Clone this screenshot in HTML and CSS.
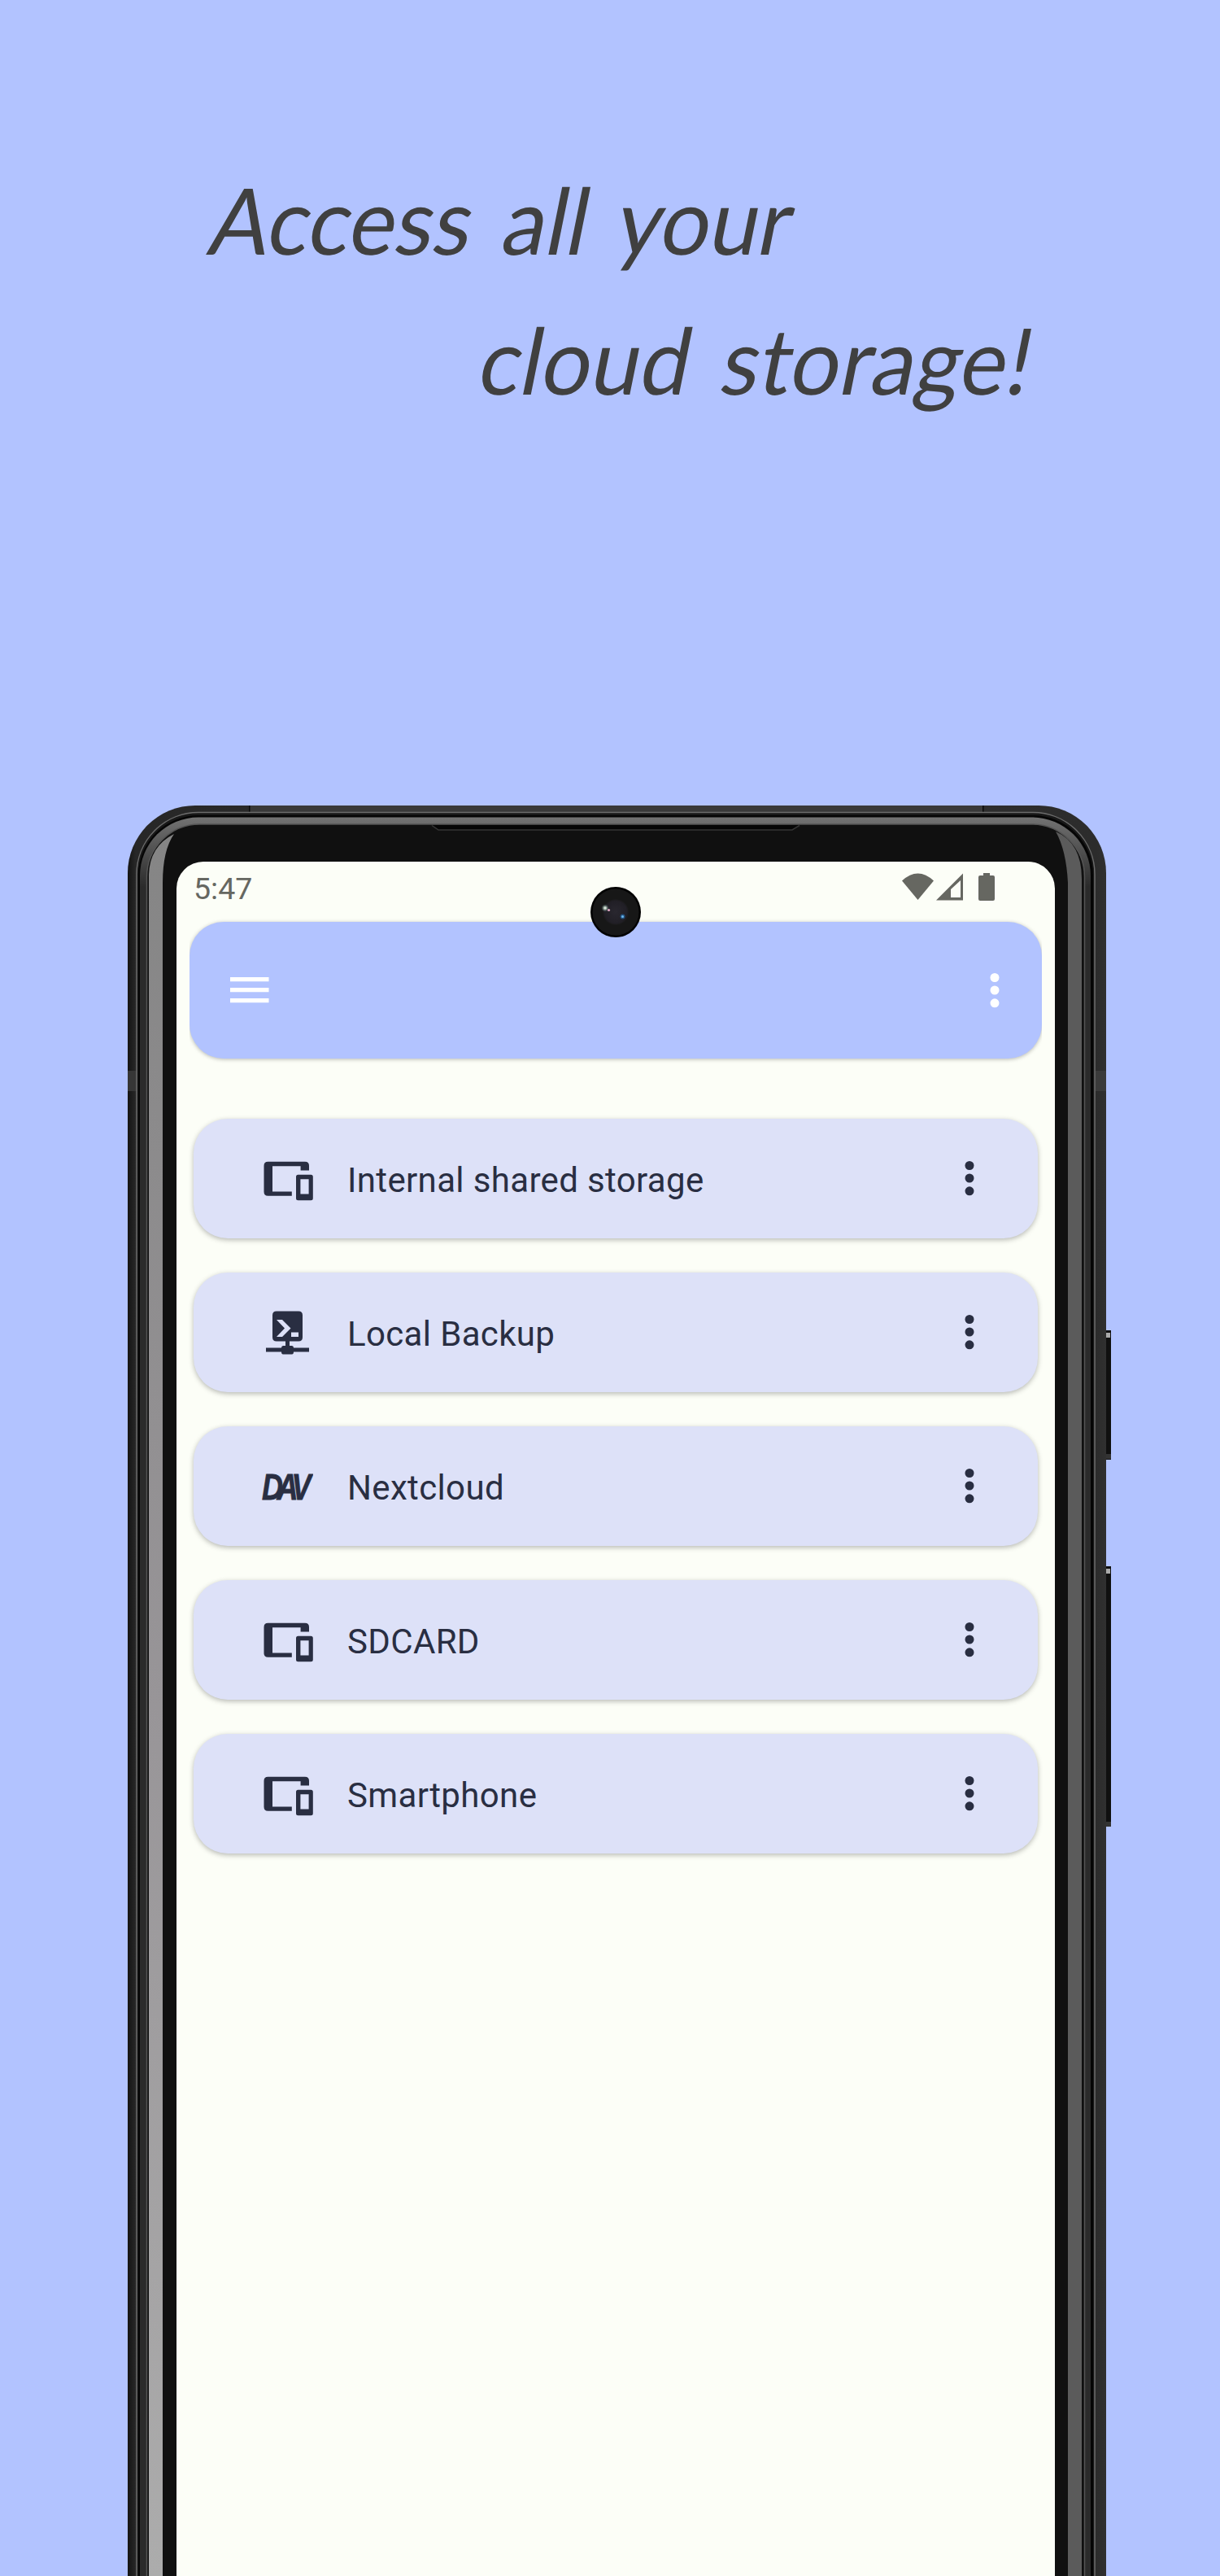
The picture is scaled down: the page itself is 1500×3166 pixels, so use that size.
FILE: index.html
```html
<!DOCTYPE html>
<html lang="en">
<head>
<meta charset="utf-8">
<title>Access all your cloud storage!</title>
<link rel="stylesheet" href="styles.css">
</head>
<body>
<h1 class="headline"><span class="line first">Access all your</span><span class="line second">cloud storage!</span></h1>
<div class="phone">
<svg class="frame" viewBox="150 985 1220 2181" aria-hidden="true">
  <defs>
    <linearGradient id="edge"><stop offset="0" stop-color="#141414"/><stop offset=".008" stop-color="#272727"/><stop offset=".5" stop-color="#303030"/><stop offset=".99" stop-color="#2c2c2c"/><stop offset="1" stop-color="#303030"/></linearGradient>
    <linearGradient id="shineL" x1="0" x2="0" y1="1025" y2="3166" gradientUnits="userSpaceOnUse"><stop offset="0" stop-color="#858585"/><stop offset=".5" stop-color="#989598"/><stop offset="1" stop-color="#acacac"/></linearGradient>
    <linearGradient id="rim" x1="0" x2="0" y1="1003" y2="1090" gradientUnits="userSpaceOnUse"><stop offset="0" stop-color="#747474"/><stop offset="1" stop-color="#2b2b2b"/></linearGradient>
  </defs>
  <g class="buttons">
    <rect x="1355" y="1635" width="11" height="159" fill="#101010"/><rect x="1360" y="1638" width="5" height="6" fill="#aaa"/><rect x="1359" y="1787" width="7" height="6" fill="#333"/>
    <rect x="1355" y="1925" width="11" height="320" fill="#101010"/><rect x="1360" y="1928" width="5" height="6" fill="#aaa"/><rect x="1359" y="2239" width="7" height="6" fill="#333"/>
  </g>
  <rect x="157" y="990" width="1203" height="2300" rx="83" fill="url(#edge)"/>
  <rect x="307" y="990" width="902" height="9" fill="#393939"/>
  <rect x="306" y="990" width="1.5" height="9" fill="#090909"/><rect x="1208" y="990" width="1.5" height="11" fill="#090909"/>
  <rect x="157" y="1316" width="12" height="25" fill="#363636"/><rect x="1346" y="1316" width="14" height="25" fill="#3b3b3b"/>
  <rect x="168" y="998.500" width="1178" height="2300" rx="76" fill="#181818" stroke="#6c6c6c" stroke-width="1.5"/>
  <rect x="170" y="1002" width="1174" height="2300" rx="74" fill="#050505"/>
  <rect x="172" y="1004.500" width="1169" height="2300" rx="72" fill="url(#rim)"/>
  <rect x="180.500" y="1013" width="1153" height="2300" rx="65" fill="#101010" stroke="#555" stroke-width="1.500"/>
  <path d="M183 3166V1075Q184 1040 214 1025Q200 1045 200 1085V3166Z" fill="url(#shineL)"/>
  <path d="M1313 3166V1085Q1311 1045 1298 1022Q1330 1036 1330 1080V3166Z" fill="#5b5b5b"/>
  <path d="M531 1014L539 1020H974L983 1014Z" fill="#060606"/>
  <path d="M531 1014.500L539 1020H974L983 1014.500" fill="none" stroke="#353535" stroke-width="1.500"/>
</svg>
<main class="screen">
  <div class="status"><span class="clock">5:47</span>
    <svg class="status-icons" viewBox="0 0 116 36" width="116" height="36"><g fill="#666761"><path d="M0 9.500Q19.500-8.500 39 9.500L19.500 33Z"/><path fill-rule="evenodd" d="M42 33.500L75 .5V33.500ZM60 30H72V9L60 20Z"/><path d="M100 0h8v3h4q2 0 2 2v27q0 2-2 2H96q-2 0-2-2V5q0-2 2-2h4Z"/></g></svg>
  </div>
  <svg class="camera" viewBox="0 0 62 62"><defs><radialGradient id="lens"><stop offset="0" stop-color="#29272f"/><stop offset=".85" stop-color="#211f26"/><stop offset="1" stop-color="#191919"/></radialGradient><radialGradient id="glow"><stop offset="0" stop-color="#fff"/><stop offset=".35" stop-color="#9fb3a4"/><stop offset="1" stop-color="#26333f" stop-opacity="0"/></radialGradient></defs><circle cx="31" cy="31" r="31" fill="#020202"/><circle cx="31" cy="31" r="28.500" fill="#171717"/><circle cx="31" cy="31" r="16" fill="url(#lens)"/><circle cx="18" cy="26" r="5" fill="url(#glow)"/><circle cx="22.500" cy="28.500" r="1.600" fill="#e0a8c4"/><circle cx="39.500" cy="36.500" r="3" fill="#24507c"/><circle cx="39.500" cy="36.500" r="1.500" fill="#6bb8ee"/></svg>
  <header class="toolbar-clip"><div class="toolbar">
    <svg width="48" height="34" viewBox="0 0 48 34" fill="#fff"><path d="M0 1h47.500v5.300H0zM0 14h47.500v5.300H0zM0 27h47.500v5.300H0z"/></svg>
    <svg width="12" height="44" viewBox="0 0 12 44" fill="#fff"><circle cx="6" cy="6.500" r="5.500"/><circle cx="6" cy="22" r="5.500"/><circle cx="6" cy="37.800" r="5.500"/></svg>
  </div></header>
  <ul class="list">
    <li class="card"><svg class="icon" viewBox="0 0 64 64"><use href="#devices"/></svg><span class="name">Internal shared storage</span><svg class="dots" viewBox="0 0 12 44"><use href="#more"/></svg></li>
    <li class="card"><svg class="icon" viewBox="0 0 64 64"><path fill-rule="evenodd" d="M19 5.500H46Q51 5.500 51 10.500V37.500Q51 42.500 46 42.500H35V48H38Q40 48 40 50.500H59V55.500H40Q40 58.500 38 58.500H27Q25 58.500 25 55.500H6V50.500H25Q25 48 27 48H30V42.500H19Q14 42.500 14 37.500V10.500Q14 5.500 19 5.500ZM19 16L29 26.500L19 37H26L36.500 26.500L26 16ZM37 31.500V37H46V31.500Z"/></svg><span class="name">Local Backup</span><svg class="dots" viewBox="0 0 12 44"><use href="#more"/></svg></li>
    <li class="card"><svg class="icon" viewBox="0 0 64 64"><text class="dav" transform="translate(1 47.800) scale(.8 1)" x="0 23 45.500">DAV</text></svg><span class="name">Nextcloud</span><svg class="dots" viewBox="0 0 12 44"><use href="#more"/></svg></li>
    <li class="card"><svg class="icon" viewBox="0 0 64 64"><use href="#devices"/></svg><span class="name">SDCARD</span><svg class="dots" viewBox="0 0 12 44"><use href="#more"/></svg></li>
    <li class="card"><svg class="icon" viewBox="0 0 64 64"><use href="#devices"/></svg><span class="name">Smartphone</span><svg class="dots" viewBox="0 0 12 44"><use href="#more"/></svg></li>
  </ul>
</main>
</div>
<svg class="defs" width="0" height="0"><defs>
  <g id="devices"><path d="M8.500 10.800H54Q59 10.800 59 15.800V21.500H48.600V16.200H14V47.500H37.800V52.800H8.500Q3.500 52.800 3.500 47.800V15.800Q3.500 10.800 8.500 10.800Z"/><path fill-rule="evenodd" d="M45.500 26.800H61.300Q63.800 26.800 63.800 29.300V55.700Q63.800 58.200 61.300 58.200H45.500Q43 58.200 43 55.700V29.300Q43 26.800 45.500 26.800ZM48.400 32.200V50.500H58.600V32.200Z"/></g>
  <g id="more"><circle cx="6" cy="6.500" r="5.500"/><circle cx="6" cy="22" r="5.500"/><circle cx="6" cy="37.800" r="5.500"/></g>
</defs></svg>
</body>
</html>
```
FILE: styles.css
```css
* { box-sizing: border-box; }
body { margin: 0; height: 3166px; overflow: hidden; background: #b2c3ff; font-family: Roboto, "Liberation Sans", sans-serif; display: flex; flex-direction: column; }
.headline { margin: 0; height: 990px; padding-top: 183px; font: 400 113px/172px Lato, "Open Sans", sans-serif; color: #404040; display: flex; flex-direction: column; align-items: flex-start; }
.line { white-space: pre; transform: scaleX(.95) skewX(-12deg); transform-origin: 0 72%; word-spacing: 12px; }
.first { margin-left: 254px; }
.second { margin-left: 585px; letter-spacing: .3px; }
.phone { position: relative; flex: 1; padding: 69px 203px 0 217px; }
.frame { position: absolute; left: 150px; top: -5px; width: 1220px; height: 2181px; }
.screen { position: relative; height: 100%; background: #fcfef7; border-radius: 33px 33px 0 0; }
.status { height: 65px; padding: 14px 72px 0 21px; display: flex; justify-content: space-between; align-items: flex-start; }
.clock { font-size: 37.500px; line-height: 38px; color: #666761; }
.status-icons { display: block; }
.camera { position: absolute; left: 509px; top: 31px; width: 62px; height: 62px; z-index: 2; }
.toolbar-clip { margin: 0 16px; padding: 9px 0; overflow: hidden; }
.toolbar { height: 168px; border-radius: 42px; background: #b2c3ff; box-shadow: 0 1px 5px rgba(0,0,0,.28); padding: 0 52px 0 50px; display: flex; align-items: center; justify-content: space-between; }
.list { list-style: none; margin: 0; padding: 65px 21px 0 21px; display: flex; flex-direction: column; gap: 42px; }
.card { height: 147px; border-radius: 42px; background: #dde1f8; box-shadow: 0 2px 6px rgba(0,0,0,.28); padding: 0 78px 0 83px; display: flex; align-items: center; color: #292e42; fill: #292e42; }
.icon { width: 64px; height: 64px; flex: none; }
.dav { font: italic 700 45px "Liberation Sans", sans-serif; stroke: #292e42; stroke-width: .8px; }
.name { flex: 1; margin-left: 42px; font-size: 42px; line-height: 60px; letter-spacing: .35px; padding-top: 4px; }
.dots { width: 12px; height: 44px; margin-bottom: 1px; }
.defs { position: absolute; }
```
